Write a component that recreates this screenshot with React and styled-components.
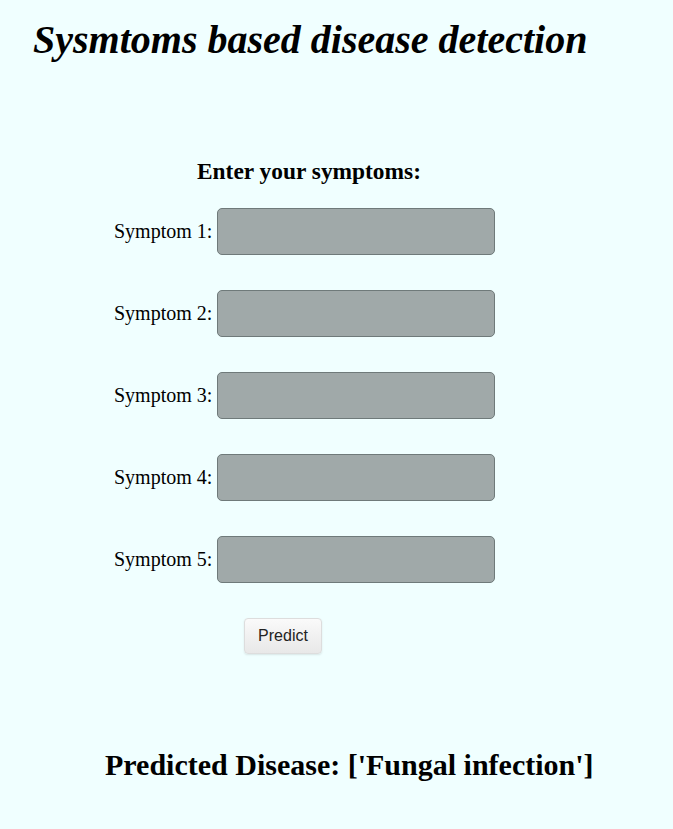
import React from "react";
import styled, { createGlobalStyle } from "styled-components";

const Global = createGlobalStyle`
  html, body { margin: 0; padding: 0; background: #f0ffff; }
  body { font-family: "Liberation Serif", "Times New Roman", serif; color: #000; }
`;

const Page = styled.div`
  min-height: 829px;
  background: #f0ffff;
  padding: 18px 0 0 33px;
  box-sizing: border-box;
`;

const Title = styled.h1`
  margin: 0;
  font-size: 40px;
  font-style: italic;
  font-weight: bold;
  line-height: 44px;
`;

const Form = styled.form`
  width: 450px;
  margin: 96px 0 0 81px;
  display: flex;
  flex-direction: column;
  align-items: flex-start;
`;

const FormHeading = styled.h3`
  margin: 0 0 24px 83px;
  font-size: 23.4px;
  font-weight: bold;
  line-height: 26px;
`;

const Row = styled.div`
  display: flex;
  align-items: center;
  gap: 5px;
  margin-bottom: 35px;
`;

const Label = styled.label`
  width: 98px;
  text-align: right;
  font-size: 20px;
  white-space: nowrap;
`;

const Input = styled.input`
  width: 278px;
  height: 47px;
  box-sizing: border-box;
  background: #a0a9a9;
  border: 1px solid #6f7a7a;
  border-radius: 5px;
`;

const Button = styled.button`
  margin: 0 0 0 130px;
  width: 78px;
  height: 36px;
  font-family: "Liberation Sans", Arial, sans-serif;
  font-size: 16px;
  color: #222;
  background: linear-gradient(#fafafa, #e8e8e8);
  border: 1px solid #ddd;
  border-radius: 4px;
  box-shadow: 0 1px 2px rgba(0,0,0,0.1);
`;

const Result = styled.h2`
  margin: 94px 0 0 72px;
  font-size: 30px;
  font-weight: bold;
`;

export default function App() {
  return (
    <>
      <Global />
      <Page>
        <Title>Sysmtoms based disease detection</Title>
        <Form onSubmit={(e) => e.preventDefault()}>
          <FormHeading>Enter your symptoms:</FormHeading>
          {[1, 2, 3, 4, 5].map((n) => (
            <Row key={n}>
              <Label htmlFor={`s${n}`}>Symptom {n}:</Label>
              <Input id={`s${n}`} type="text" />
            </Row>
          ))}
          <Button type="submit">Predict</Button>
        </Form>
        <Result>Predicted Disease: ['Fungal infection']</Result>
      </Page>
    </>
  );
}
